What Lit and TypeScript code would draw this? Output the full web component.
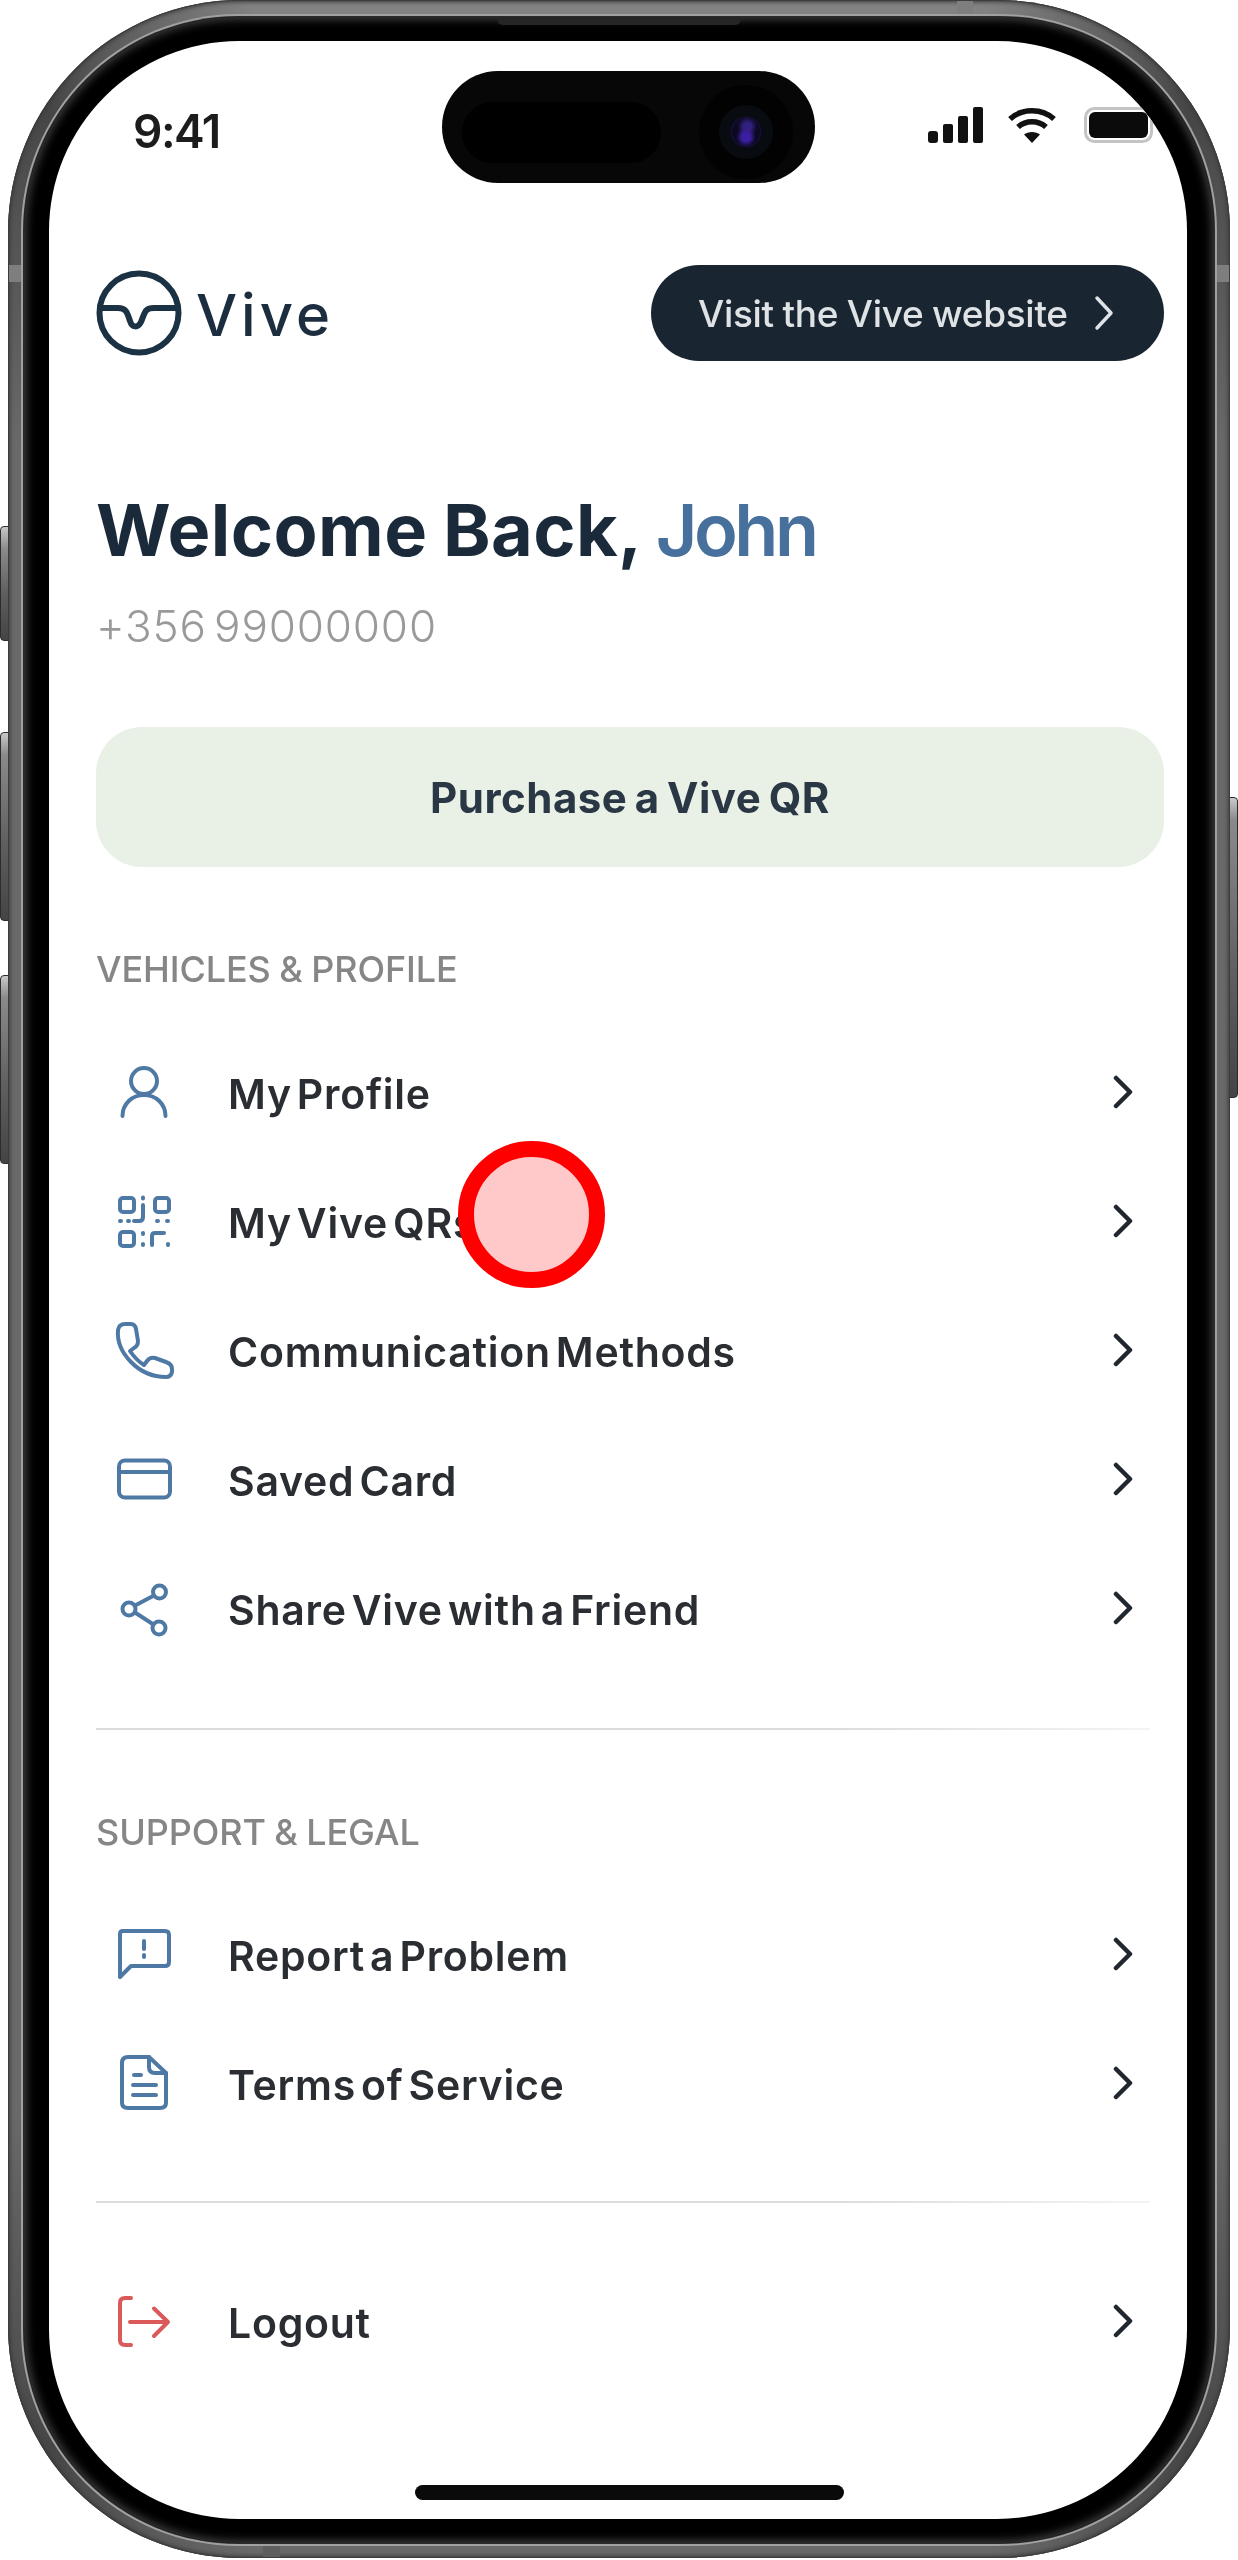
import { LitElement, html, css, svg } from "lit";
import { customElement } from "lit/decorators.js";

const ICONS: Record<string, unknown> = {
  person: svg`<circle cx="30" cy="17" r="13"/><path d="M8.500 52C8.500 40 18 31 30 31S51.500 40 51.500 52"/>`,
  qr: svg`<rect x="6" y="5" width="14" height="14" rx="3"/><rect x="41" y="5" width="14" height="14" rx="3"/><rect x="6" y="39" width="14" height="14" rx="3"/>
    <path d="M29 4.500v1M29 12v12q0 4-4 4h-5M6 28h1M14 28h1M43 28h1M53 28h1M29 40v1M29 51v1M38 52v-9q0-3 3-3h9M54 51v1"/>`,
  phone: svg`<path d="M4 8Q5 2 11 2H17Q21 2 22 7L24 19Q24 24 20 26L16 29Q22 38 30 43L33 39Q36 35 41 36L52 40Q58 42 58 47V50Q57 55 52 55C24 55 2 30 4 8Z"/>`,
  card: svg`<rect x="5" y="9.500" width="51" height="37" rx="6"/><path d="M5 21H56"/>`,
  share: svg`<circle cx="45.500" cy="12" r="6.500"/><circle cx="15" cy="29" r="6.500"/><circle cx="45" cy="48" r="6.500"/><path d="M21 25.500L40 15.500M21 32.500L39.500 44.500"/>`,
  report: svg`<path d="M6 8Q6 5 9 5H51Q55 5 55 9V36Q55 40 51 40H17L6 51Z"/><path d="M30 15v8M30 29v2"/>`,
  doc: svg`<path d="M14 2H35L52 18V48Q52 53 46 53H14Q8 53 8 48V8Q8 2 14 2Z"/><path d="M35 2V12Q35 18 41 18H52M20 20H27M19 30H42M19 40H42"/>`,
  logout: svg`<path d="M17 5H11Q6 5 6 10V47Q6 52 11 52H17M16 29H54M40 15.500L54 29L40 43"/>`,
};

@customElement("app-root")
export class AppRoot extends LitElement {
  static styles = css`
    :host { display: block; position: relative; width: 1238px; height: 2560px; background: #fff; overflow: hidden;
      font-family: "Inter", "Liberation Sans", sans-serif; }
    * { box-sizing: border-box; }
    .side { position: absolute; width: 12px; border-radius: 4px; border: 1px solid #2c2c2c;
      background: linear-gradient(180deg, #c9c9c9 0, #8a8a8a 22px, #5e5e5e 60%, #444 100%); }
    .s1 { left: 0; top: 526px; height: 115px; }
    .s2 { left: 0; top: 732px; height: 189px; }
    .s3 { left: 0; top: 975px; height: 189px; }
    .s4 { right: 0; top: 797px; height: 301px; }
    .device { position: relative; margin: 0 8px; width: 1222px; height: 2558px; padding: 17px 16px 15px; border-radius: 232px;
      background: conic-gradient(#828282 0 16deg, #464646 26deg, #6a6a6a 36deg, #6a6a6a 144deg, #464646 154deg, #6a6a6a 164deg, #6a6a6a 196deg, #464646 206deg, #6a6a6a 216deg, #6a6a6a 324deg, #464646 334deg, #828282 344deg);
      box-shadow: inset 0 0 0 1px #3c3c3c, inset 0 0 4px 2px #3c3c3c; }
    .band { position: absolute; background: #7e7e7e; }
    .b-top { left: 949px; top: 1px; width: 16px; height: 14px; }
    .b-left { left: 1px; top: 265px; width: 13px; height: 17px; }
    .b-right { right: 1px; top: 265px; width: 13px; height: 17px; }
    .b-bottom { left: 255px; bottom: 1px; width: 17px; height: 14px; background: #5e5e5e; }
    .bezel { position: relative; height: 100%; padding: 24px 27px 24px 25px; border-radius: 214px; background: #000;
      box-shadow: 0 0 0 1px #2a2a2a, 0 0 0 3px #a0a0a0, inset 0 0 9px 3px #3a3a3a; }
    .slit { position: absolute; left: 473px; top: 0; width: 244px; height: 8px; background: #252525; border-radius: 0 0 6px 6px; }
    .screen { position: relative; height: 100%; background: #fff; border-radius: 190px; overflow: hidden;
      display: flex; flex-direction: column; padding: 0 23px 19px 47px; filter: blur(0.5px); }
    .status { display: grid; grid-template-columns: 346px 373px 1fr; align-items: center; padding-top: 30px; height: 142px; }
    .time { font-size: 46px; font-weight: 600; color: #1c1c1c; padding-left: 37px; letter-spacing: -1.500px; line-height: 1; margin-top: 7px; }
    .island { position: relative; height: 112px; border-radius: 56px; background: #070707; }
    .sensor { position: absolute; left: 20px; top: 31px; width: 199px; height: 61px; border-radius: 31px; background: #000; }
    .cam { position: absolute; left: 257px; top: 14px; width: 94px; height: 94px; border-radius: 50%; background: #020202;
      display: flex; align-items: center; justify-content: center; }
    .lens-ring { width: 54px; height: 54px; border-radius: 50%; background: #080b10; display: flex; align-items: center; justify-content: center; }
    .lens { width: 28px; height: 28px; border-radius: 50%;
      background: radial-gradient(circle at 50% 68%, #3a1fa0 0 18%, transparent 42%), radial-gradient(circle at 55% 30%, #31207c 0 16%, transparent 40%), #0b0820;
      box-shadow: 0 0 3px #2b1c78; }
    .sysicons { display: flex; align-items: center; margin-left: 113px; margin-top: -5px; }
    .sig { margin-right: 23px; }
    .wifi { margin-right: 27px; }
    .header { display: flex; justify-content: space-between; align-items: center; margin-top: 82px; height: 96px; }
    .brand { display: flex; align-items: center; gap: 14px; }
    .brand span { font-size: 58px; font-weight: 500; color: #1b2d3f; letter-spacing: 4px; line-height: 1; margin-top: 3px; }
    .visit { display: flex; align-items: center; justify-content: space-between; width: 513px; height: 96px; padding: 0 50px 0 47px; border-radius: 48px; background: #192632; color: #dfe3e6; }
    .visit span { font-size: 37px; font-weight: 500; letter-spacing: -0.300px; word-spacing: -1px; }
    h1 { margin: 125px 0 0; font-size: 72px; line-height: 88px; font-weight: 700; color: #1a2a3a; letter-spacing: 0.400px; word-spacing: -2px; white-space: nowrap; }
    h1 b { font-weight: 600; color: #47709c; letter-spacing: -3.500px; }
    .tel { margin-top: 27px; font-size: 44px; line-height: 50px; color: #9a9a9a; font-weight: 300; word-spacing: -6px; letter-spacing: 0.850px; }
    .buy { margin-top: 76px; height: 140px; border-radius: 46px; background: #e9f0e6; display: flex; align-items: center; justify-content: center;
      font-size: 42px; font-weight: 700; color: #2a3845; word-spacing: -3px; letter-spacing: 0.500px; }
    .label { font-size: 36px; line-height: 40px; font-weight: 500; color: #868686; letter-spacing: -0.100px; word-spacing: -1px; white-space: nowrap; }
    .l1 { margin-top: 82px; }
    .l2 { margin-top: 82px; }
    .rows { display: flex; flex-direction: column; }
    .r1 { margin-top: 40px; }
    .r2 { margin-top: 39px; }
    .r3 { margin-top: 55px; }
    .row { display: flex; align-items: center; height: 129px; padding: 0 30px 0 18px; }
    .ico { width: 60px; height: 60px; fill: none; stroke: #4f79a5; stroke-width: 4; stroke-linecap: round; stroke-linejoin: round; flex: none; }
    .ico.red { stroke: #d95a58; }
    .row span { flex: 1; margin-left: 54px; font-size: 41px; font-weight: 600; color: #2a2e33; word-spacing: -6px; letter-spacing: 0.750px; }
    .chev { flex: none; margin-top: -3px; fill: none; stroke: #20272e; stroke-width: 4.500; stroke-linecap: round; stroke-linejoin: round; }
    .rule { height: 2px; margin-right: 14px; background: linear-gradient(90deg, #dcdcdc 0, #dcdcdc 70%, #f4f4f4 100%); }
    .rule.a { margin-top: 54px; }
    .rule.b { margin-top: 52px; }
    .home { margin: auto 0 0 319px; width: 429px; height: 15px; border-radius: 8px; background: #0a0a0a; }
    .tap { position: absolute; left: 409px; top: 1100px; width: 147px; height: 147px; border-radius: 50%; border: 16px solid #ff0000; background: rgba(255, 0, 0, 0.21); }
  `;

  private row(icon: string, text: string, red = false) {
    return html`<div class="row">
      <svg class="ico ${red ? "red" : ""}" viewBox="0 0 60 60">${ICONS[icon]}</svg>
      <span>${text}</span>
      <svg class="chev" width="22" height="34" viewBox="0 0 22 34"><path d="M4 3L18 17L4 31"/></svg>
    </div>`;
  }

  render() {
    return html`
      <div class="side s1"></div><div class="side s2"></div><div class="side s3"></div><div class="side s4"></div>
      <div class="device">
        <div class="band b-top"></div><div class="band b-left"></div><div class="band b-right"></div><div class="band b-bottom"></div>
        <div class="bezel">
          <div class="slit"></div>
          <div class="screen">
            <div class="status">
              <div class="time">9:41</div>
              <div class="island"><div class="sensor"></div><div class="cam"><div class="lens-ring"><div class="lens"></div></div></div></div>
              <div class="sysicons">
                <svg class="sig" width="56" height="36" viewBox="0 0 56 36" fill="#111"><rect x="0" y="24" width="10" height="12" rx="3"/><rect x="15" y="17" width="10" height="19" rx="2"/><rect x="30" y="9" width="10" height="27" rx="2"/><rect x="45" y="0" width="10" height="36" rx="2"/></svg>
                <svg class="wifi" width="50" height="36" viewBox="0 0 50 36" fill="none" stroke="#111" stroke-width="5.500"><path d="M3 12C15 1 35 1 47 12"/><path d="M11 20C19 13 31 13 39 20"/><path d="M25 36L17 27.500C21 24 29 24 33 27.500Z" fill="#111" stroke="none"/></svg>
                <svg width="70" height="36" viewBox="0 0 70 36"><rect x="1.500" y="1.500" width="66" height="33" rx="9" fill="#fff" stroke="#c4c4c4" stroke-width="3"/><rect x="5" y="5" width="59" height="26" rx="6" fill="#0b0b0b"/></svg>
              </div>
            </div>

            <div class="header">
              <div class="brand">
                <svg width="86" height="86" viewBox="0 0 86 86" fill="none" stroke="#1b3144" stroke-width="6" stroke-linecap="round"><circle cx="43" cy="43" r="39.500"/><path d="M5 38H22C30 38 31 42 34 51C36 58 42 58 45 52C49 42 49 38 58 38H81"/></svg>
                <span>Vive</span>
              </div>
              <div class="visit">
                <span>Visit the Vive website</span>
                <svg width="20" height="36" viewBox="0 0 20 36" fill="none" stroke="#dfe3e6" stroke-width="3.500" stroke-linecap="round" stroke-linejoin="round"><path d="M3 3L17 18L3 33"/></svg>
              </div>
            </div>

            <h1>Welcome Back, <b>John</b></h1>
            <div class="tel">+356 99000000</div>
            <div class="buy">Purchase a Vive QR</div>

            <div class="label l1">VEHICLES &amp; PROFILE</div>
            <div class="rows r1">
              ${this.row("person", "My Profile")}
              ${this.row("qr", "My Vive QRs")}
              ${this.row("phone", "Communication Methods")}
              ${this.row("card", "Saved Card")}
              ${this.row("share", "Share Vive with a Friend")}
            </div>
            <div class="rule a"></div>
            <div class="label l2">SUPPORT &amp; LEGAL</div>
            <div class="rows r2">
              ${this.row("report", "Report a Problem")}
              ${this.row("doc", "Terms of Service")}
            </div>
            <div class="rule b"></div>
            <div class="rows r3">${this.row("logout", "Logout", true)}</div>
            <div class="home"></div>
            <div class="tap"></div>
          </div>
        </div>
      </div>
    `;
  }
}
